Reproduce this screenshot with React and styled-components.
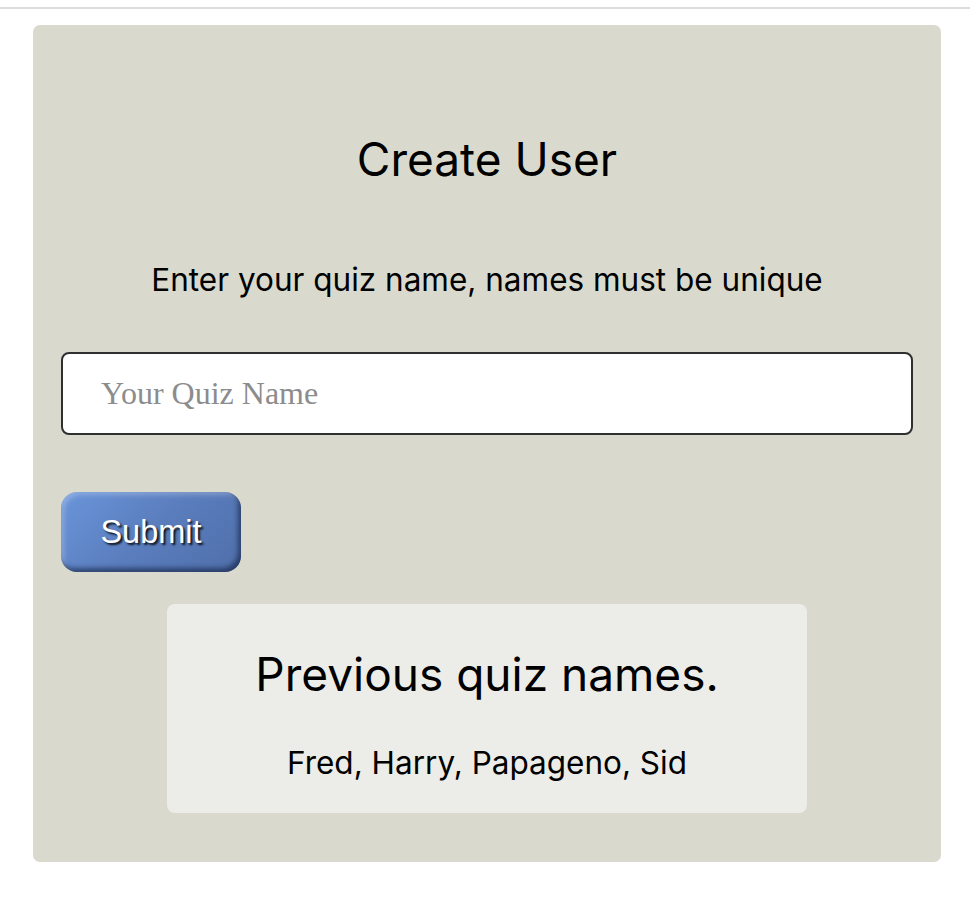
import React from "react";
import styled, { createGlobalStyle } from "styled-components";

const Global = createGlobalStyle`
  html, body { margin: 0; padding: 0; background: #fff; }
  body { font-family: Inter, "Noto Sans", sans-serif; color: #000; }
`;

const TopRule = styled.div`
  margin-top: 7px;
  height: 2px;
  background: #dddddd;
`;

const Panel = styled.main`
  margin: 16px 29px 0 33px;
  background: #d9dacd;
  border-radius: 7px;
  padding: 100px 28px 49px 28px;
  display: flex;
  flex-direction: column;
  align-items: center;
`;

const Title = styled.h1`
  margin: 0;
  font-size: 46px;
  font-weight: 400;
  line-height: 68px;
  text-align: center;
`;

const Instructions = styled.p`
  margin: 67px 0 0;
  font-size: 31.5px;
  line-height: 40px;
  text-align: center;
`;

const Form = styled.form`
  align-self: stretch;
  display: flex;
  flex-direction: column;
  align-items: flex-start;
  margin-top: 52px;
`;

const NameInput = styled.input`
  box-sizing: border-box;
  width: 100%;
  height: 83px;
  border: 2px solid #2f2f2f;
  border-radius: 8px;
  background: #fff;
  padding: 0 38px;
  font-family: "Liberation Serif", serif;
  font-size: 32px;
  color: #333;
  outline: none;
  &::placeholder { color: #8c8c8c; }
`;

const SubmitButton = styled.button`
  margin-top: 57px;
  width: 180px;
  height: 80px;
  border: none;
  border-radius: 16px;
  background: linear-gradient(135deg, #6a95da 0%, #5a7dbd 50%, #4f6faa 100%);
  box-shadow: inset -3px -4px 5px rgba(10, 20, 50, 0.55), inset 3px 3px 5px rgba(255, 255, 255, 0.25);
  color: #fff;
  font-family: "Liberation Sans", Arial, sans-serif;
  font-size: 32.5px;
  text-shadow: 2px 2px 2px rgba(0, 0, 0, 0.85);
  cursor: pointer;
`;

const PreviousBox = styled.section`
  margin-top: 32px;
  width: 640px;
  box-sizing: border-box;
  background: #ecede8;
  border-radius: 8px;
  padding: 40px 20px 30px;
  text-align: center;
`;

const PreviousTitle = styled.h2`
  margin: 0;
  font-size: 46px;
  font-weight: 400;
  line-height: 60px;
`;

const PreviousList = styled.p`
  margin: 39px 0 0;
  font-size: 31.5px;
  line-height: 40px;
`;

export default function App() {
  return (
    <>
      <Global />
      <TopRule />
      <Panel>
        <Title>Create User</Title>
        <Instructions>Enter your quiz name, names must be unique</Instructions>
        <Form onSubmit={(e) => e.preventDefault()}>
          <NameInput type="text" placeholder="Your Quiz Name" />
          <SubmitButton type="submit">Submit</SubmitButton>
        </Form>
        <PreviousBox>
          <PreviousTitle>Previous quiz names.</PreviousTitle>
          <PreviousList>Fred, Harry, Papageno, Sid</PreviousList>
        </PreviousBox>
      </Panel>
    </>
  );
}
